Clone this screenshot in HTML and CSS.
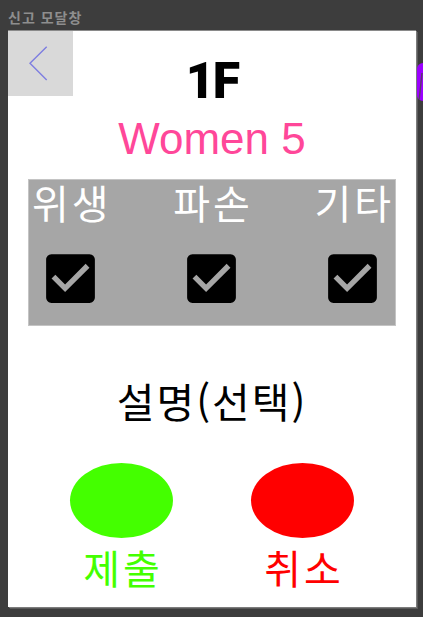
FILE: index.html
```html
<!DOCTYPE html>
<html lang="ko">
<head>
<meta charset="utf-8">
<title>신고 모달창</title>
<link rel="stylesheet" href="styles.css">
</head>
<body>
<div class="window-title">신고 모달창</div>
<div class="modal">
  <button class="back" aria-label="뒤로">
    <svg width="65" height="65" viewBox="0 0 65 65"><polyline points="38.7,15.7 22,32.3 38.7,49" fill="none" stroke="#7d7de0" stroke-width="1.4"/></svg>
  </button>
  <div class="side-tab">
    <svg width="6" height="38" viewBox="0 0 6 38"><line x1="5" y1="10" x2="2" y2="38" stroke="#5a3a6a" stroke-width="1.4"/></svg>
  </div>
  <div class="floor">1F</div>
  <div class="room">Women 5</div>
  <div class="options">
    <label class="option">
      <span class="option-label">위생</span>
      <svg class="check" width="65" height="65" viewBox="0 0 24 24"><path fill="#000" fill-rule="evenodd" d="M19 3H5c-1.11 0-2 .9-2 2v14c0 1.1.89 2 2 2h14c1.11 0 2-.9 2-2V5c0-1.1-.89-2-2-2zm-9 14l-5-5 1.41-1.41L10 14.17l7.59-7.59L19 8l-9 9z"/></svg>
    </label>
    <label class="option">
      <span class="option-label">파손</span>
      <svg class="check" width="65" height="65" viewBox="0 0 24 24"><path fill="#000" fill-rule="evenodd" d="M19 3H5c-1.11 0-2 .9-2 2v14c0 1.1.89 2 2 2h14c1.11 0 2-.9 2-2V5c0-1.1-.89-2-2-2zm-9 14l-5-5 1.41-1.41L10 14.17l7.59-7.59L19 8l-9 9z"/></svg>
    </label>
    <label class="option">
      <span class="option-label">기타</span>
      <svg class="check" width="65" height="65" viewBox="0 0 24 24"><path fill="#000" fill-rule="evenodd" d="M19 3H5c-1.11 0-2 .9-2 2v14c0 1.1.89 2 2 2h14c1.11 0 2-.9 2-2V5c0-1.1-.89-2-2-2zm-9 14l-5-5 1.41-1.41L10 14.17l7.59-7.59L19 8l-9 9z"/></svg>
    </label>
  </div>
  <div class="desc">설명(선택)</div>
  <div class="actions">
    <div class="action submit">
      <span class="dot"></span>
      <span class="action-label">제출</span>
    </div>
    <div class="action cancel">
      <span class="dot"></span>
      <span class="action-label">취소</span>
    </div>
  </div>
</div>
</body>
</html>
```
FILE: styles.css
```css
html, body {
  margin: 0;
  padding: 0;
}
body {
  background: #3d3d3d;
  width: 423px;
  height: 617px;
  overflow: hidden;
  font-family: "Noto Sans CJK KR", "Noto Sans", sans-serif;
}
.window-title {
  height: 26px;
  padding: 4px 0 0 8px;
  line-height: 26px;
  font-size: 14px;
  font-weight: 700;
  letter-spacing: 1px;
  color: #8e8e8e;
}
.modal {
  position: relative;
  margin-left: 8px;
  width: 408px;
  background: #fff;
  border-top: 1px solid #8a8a8a;
  box-shadow: 1px 1px 0 #7c7c7c, 2px 2px 0 #5a5a5a;
  padding-top: 25px;
  box-sizing: content-box;
  display: flex;
  flex-direction: column;
  align-items: center;
  height: 551px;
}
.back {
  position: absolute;
  left: 0;
  top: 0;
  width: 65px;
  height: 65px;
  padding: 0;
  border: 0;
  background: #d9d9d9;
  display: block;
}
.back svg { display: block; }
.side-tab {
  position: absolute;
  left: 409px;
  top: 32px;
  width: 6px;
  height: 38px;
  border-radius: 7px 0 0 7px;
  background: #9b00ff;
  overflow: hidden;
}
.side-tab svg { display: block; }
.floor {
  font-family: Roboto, "Liberation Sans", sans-serif;
  font-weight: 900;
  font-size: 50px;
  line-height: 51px;
  color: #000;
  letter-spacing: -2px;
}
.room {
  margin-top: 10px;
  font-family: "Liberation Sans", Arial, sans-serif;
  font-size: 44px;
  line-height: 43px;
  color: #ff4799;
}
.options {
  margin-top: 19px;
  width: 368px;
  box-sizing: border-box;
  height: 147px;
  background: #a6a6a6;
  border: 1px solid #c4c4c4;
  padding: 2px 1px 0 3px;
  display: flex;
  justify-content: space-between;
}
.option {
  display: flex;
  flex-direction: column;
  align-items: center;
}
.option-label {
  font-size: 40px;
  line-height: 40px;
  letter-spacing: 3px;
  color: #fff;
}
.check {
  display: block;
  margin-top: 24px;
  margin-right: 3px;
}
.desc {
  margin-top: 54px;
  font-size: 41px;
  line-height: 40px;
  letter-spacing: 2px;
  color: #000;
}
.actions {
  margin-top: 43px;
  display: flex;
  gap: 78px;
}
.action {
  display: flex;
  flex-direction: column;
  align-items: center;
  width: 103px;
}
.dot {
  display: block;
  width: 103px;
  height: 75px;
  border-radius: 50%;
}
.action-label {
  margin-top: 9px;
  font-size: 40px;
  line-height: 40px;
  letter-spacing: 3px;
  padding-left: 3px;
}
.submit .dot { background: #44ff00; }
.submit .action-label { color: #44ff00; }
.cancel .dot { background: #ff0000; }
.cancel .action-label { color: #ff0000; }
```
